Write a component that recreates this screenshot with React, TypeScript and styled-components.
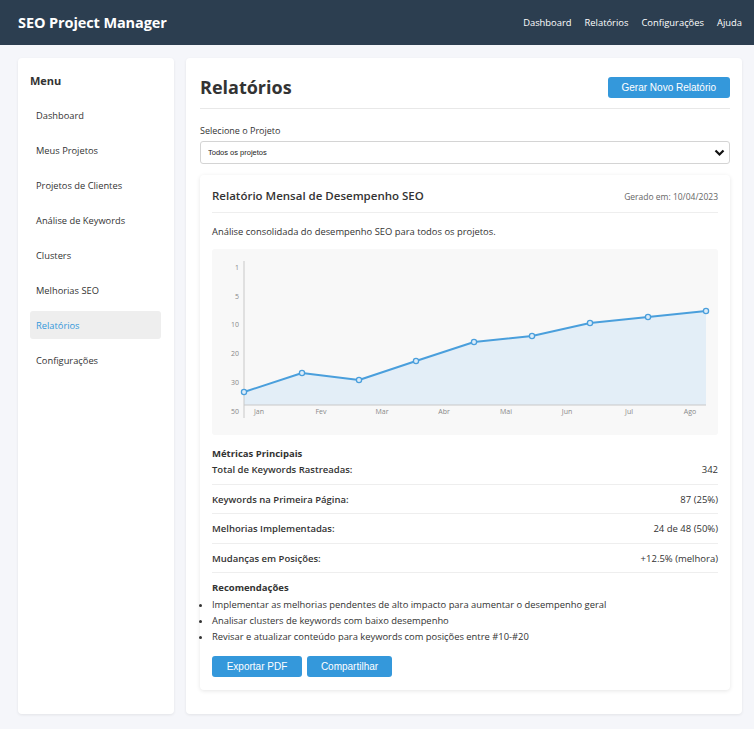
import React from "react";
import styled, { createGlobalStyle } from "styled-components";

const GlobalStyle = createGlobalStyle`
  * { box-sizing: border-box; }
  html, body { margin: 0; padding: 0; }
  body {
    background: #f5f6fa;
    font-family: "Open Sans", "Noto Sans", "Liberation Sans", sans-serif;
    color: #333;
  }
`;

const Page = styled.div`
  min-height: 100vh;
  display: flex;
  flex-direction: column;
`;

const TopBar = styled.header`
  height: 45px;
  background: #2c3e50;
  display: flex;
  align-items: center;
  justify-content: space-between;
  padding: 0 12px 0 18px;
  flex-shrink: 0;
`;

const Brand = styled.div`
  color: #fff;
  font-weight: 700;
  font-size: 14.5px;
  letter-spacing: -0.1px;
`;

const TopNav = styled.nav`
  display: flex;
  gap: 13px;
`;

const TopLink = styled.a`
  color: #fff;
  font-size: 9.4px;
  text-decoration: none;
`;

const Body = styled.div`
  flex: 1;
  display: flex;
  gap: 12px;
  padding: 13px 12px 15px 18px;
`;

const Sidebar = styled.aside`
  width: 156px;
  flex-shrink: 0;
  background: #fff;
  border-radius: 4px;
  box-shadow: 0 1px 3px rgba(0, 0, 0, 0.08);
  padding: 14px 13px 14px 12px;
`;

const SideTitle = styled.h3`
  margin: 0 0 11px;
  font-size: 11px;
  font-weight: 700;
  color: #333;
  line-height: 18px;
`;

const SideList = styled.ul`
  list-style: none;
  margin: 0;
  padding: 0;
  display: flex;
  flex-direction: column;
  gap: 7px;
`;

const SideItem = styled.li<{ $active?: boolean }>`
  height: 28px;
  display: flex;
  align-items: center;
  padding-left: 6px;
  font-size: 9.3px;
  border-radius: 3px;
  color: ${(p) => (p.$active ? "#3498db" : "#333")};
  background: ${(p) => (p.$active ? "#eeeeee" : "transparent")};
`;

const Main = styled.main`
  flex: 1;
  background: #fff;
  border-radius: 4px;
  box-shadow: 0 1px 3px rgba(0, 0, 0, 0.08);
  padding: 14px 12px 14px 14px;
`;

const MainHeader = styled.div`
  display: flex;
  justify-content: space-between;
  align-items: center;
  padding: 3px 0 9px;
  border-bottom: 1px solid #e8e8e8;
`;

const PageTitle = styled.h1`
  margin: 0;
  font-size: 18px;
  font-weight: 700;
  color: #333;
  line-height: 24px;
`;

const Button = styled.button`
  background: #3498db;
  color: #fff;
  border: none;
  border-radius: 3px;
  height: 21px;
  padding: 0 14px;
  font-family: "Liberation Sans", Arial, sans-serif;
  font-size: 10px;
  cursor: pointer;
`;

const Field = styled.div`
  margin-top: 15px;
`;

const Label = styled.label`
  display: block;
  font-size: 9px;
  line-height: 13px;
  margin-bottom: 4px;
`;

const SelectWrap = styled.div`
  position: relative;
`;

const Select = styled.select`
  display: block;
  width: 100%;
  height: 23px;
  appearance: none;
  -webkit-appearance: none;
  border: 1px solid #d4d4d4;
  border-radius: 3px;
  background: #fff;
  padding: 0 7px;
  font-family: "Liberation Sans", Arial, sans-serif;
  font-size: 7.5px;
  color: #222;
`;

const Chevron = styled.svg`
  position: absolute;
  right: 5px;
  top: 8px;
  pointer-events: none;
`;

const ReportCard = styled.section`
  margin-top: 11px;
  background: #fff;
  border-radius: 4px;
  box-shadow: 0 1px 4px rgba(0, 0, 0, 0.1);
  padding: 12px 12px 13px;
`;

const ReportHead = styled.div`
  display: flex;
  justify-content: space-between;
  align-items: center;
  padding-bottom: 7px;
  border-bottom: 1px solid #eee;
`;

const ReportTitle = styled.h2`
  margin: 0;
  font-size: 11.5px;
  font-weight: 600;
  line-height: 18px;
  color: #333;
`;

const ReportDate = styled.span`
  font-size: 8.5px;
  color: #666;
`;

const Desc = styled.p`
  margin: 12px 0 10px;
  font-size: 9.4px;
  line-height: 14px;
`;

const ChartBox = styled.div`
  background: #f8f8f8;
  border-radius: 3px;
  height: 186px;
`;

const SectionTitle = styled.h4`
  margin: 12px 0 2px;
  font-size: 9.5px;
  font-weight: 700;
  line-height: 14px;
`;

const MetricRow = styled.div`
  display: flex;
  justify-content: space-between;
  font-size: 9.5px;
  line-height: 14px;
  padding-bottom: 6.5px;
  margin-bottom: 8px;
  border-bottom: 1px solid #eee;
`;

const MetricLabel = styled.span`
  font-weight: 600;
`;

const RecTitle = styled(SectionTitle)`
  margin-top: 0;
`;

const RecList = styled.ul`
  margin: 0;
  padding: 0;
  list-style: disc outside;
`;

const RecItem = styled.li`
  font-size: 9.4px;
  line-height: 16px;
`;

const Actions = styled.div`
  display: flex;
  gap: 5px;
  margin-top: 11px;
`;

const WideButton = styled(Button)<{ $w: number }>`
  width: ${(p) => p.$w}px;
  padding: 0;
`;

const points = [
  [32, 143],
  [90, 124],
  [147, 131],
  [204, 112],
  [262, 93],
  [320, 87],
  [378, 74],
  [436, 68],
  [494, 62],
];
const yLabels: [string, number][] = [
  ["1", 18],
  ["5", 47],
  ["10", 75],
  ["20", 104],
  ["30", 133],
  ["50", 162],
];
const months: [string, number][] = [
  ["Jan", 47],
  ["Fev", 109],
  ["Mar", 170],
  ["Abr", 232],
  ["Mai", 294],
  ["Jun", 355],
  ["Jul", 417],
  ["Ago", 478],
];

function Chart() {
  const line = points.map((p) => p.join(",")).join(" ");
  const area = `32,156 ${line} 494,156`;
  return (
    <svg width="100%" height="186" viewBox="0 0 506 186" preserveAspectRatio="none">
      <polygon points={area} fill="#e3eef7" />
      <line x1="32" y1="12" x2="32" y2="169" stroke="#c8c8c8" strokeWidth="1" />
      <line x1="32" y1="156" x2="494" y2="156" stroke="#c8c8c8" strokeWidth="1" />
      <polyline points={line} fill="none" stroke="#4a9fdc" strokeWidth="2" strokeLinejoin="round" />
      {points.map(([x, y], i) => (
        <circle key={i} cx={x} cy={y} r="2.6" fill="#dcecf9" stroke="#4a9fdc" strokeWidth="1.3" />
      ))}
      {yLabels.map(([t, y]) => (
        <text key={t} x="27" y={y + 2.5} textAnchor="end" fontSize="7" fill="#888" fontFamily="Open Sans, sans-serif">
          {t}
        </text>
      ))}
      {months.map(([t, x]) => (
        <text key={t} x={x} y={164.5} textAnchor="middle" fontSize="7" fill="#888" fontFamily="Open Sans, sans-serif">
          {t}
        </text>
      ))}
    </svg>
  );
}

const menu = [
  "Dashboard",
  "Meus Projetos",
  "Projetos de Clientes",
  "Análise de Keywords",
  "Clusters",
  "Melhorias SEO",
  "Relatórios",
  "Configurações",
];

const metrics: [string, string][] = [
  ["Total de Keywords Rastreadas:", "342"],
  ["Keywords na Primeira Página:", "87 (25%)"],
  ["Melhorias Implementadas:", "24 de 48 (50%)"],
  ["Mudanças em Posições:", "+12.5% (melhora)"],
];

export default function App() {
  return (
    <>
      <GlobalStyle />
      <Page>
        <TopBar>
          <Brand>SEO Project Manager</Brand>
          <TopNav>
            <TopLink>Dashboard</TopLink>
            <TopLink>Relatórios</TopLink>
            <TopLink>Configurações</TopLink>
            <TopLink>Ajuda</TopLink>
          </TopNav>
        </TopBar>
        <Body>
          <Sidebar>
            <SideTitle>Menu</SideTitle>
            <SideList>
              {menu.map((m) => (
                <SideItem key={m} $active={m === "Relatórios"}>
                  {m}
                </SideItem>
              ))}
            </SideList>
          </Sidebar>
          <Main>
            <MainHeader>
              <PageTitle>Relatórios</PageTitle>
              <Button>Gerar Novo Relatório</Button>
            </MainHeader>
            <Field>
              <Label>Selecione o Projeto</Label>
              <SelectWrap>
                <Select defaultValue="all">
                  <option value="all">Todos os projetos</option>
                </Select>
                <Chevron width="11" height="8" viewBox="0 0 11 8">
                  <path d="M1.5 1.5 L5.5 5.5 L9.5 1.5" fill="none" stroke="#111" strokeWidth="2.2" />
                </Chevron>
              </SelectWrap>
            </Field>
            <ReportCard>
              <ReportHead>
                <ReportTitle>Relatório Mensal de Desempenho SEO</ReportTitle>
                <ReportDate>Gerado em: 10/04/2023</ReportDate>
              </ReportHead>
              <Desc>Análise consolidada do desempenho SEO para todos os projetos.</Desc>
              <ChartBox>
                <Chart />
              </ChartBox>
              <SectionTitle>Métricas Principais</SectionTitle>
              {metrics.map(([l, v]) => (
                <MetricRow key={l}>
                  <MetricLabel>{l}</MetricLabel>
                  <span>{v}</span>
                </MetricRow>
              ))}
              <RecTitle>Recomendações</RecTitle>
              <RecList>
                <RecItem>Implementar as melhorias pendentes de alto impacto para aumentar o desempenho geral</RecItem>
                <RecItem>Analisar clusters de keywords com baixo desempenho</RecItem>
                <RecItem>Revisar e atualizar conteúdo para keywords com posições entre #10-#20</RecItem>
              </RecList>
              <Actions>
                <WideButton $w={90}>Exportar PDF</WideButton>
                <WideButton $w={85}>Compartilhar</WideButton>
              </Actions>
            </ReportCard>
          </Main>
        </Body>
      </Page>
    </>
  );
}
